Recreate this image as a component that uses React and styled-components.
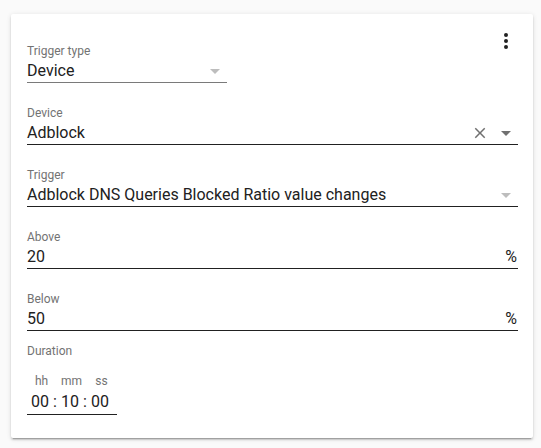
import React from 'react'
import styled, { createGlobalStyle } from 'styled-components'

const Global = createGlobalStyle`
  body {
    margin: 0;
    background: #fafafa;
    font-family: Roboto, "Noto Sans", sans-serif;
    color: #212121;
  }
`

const Page = styled.div`
  padding: 14px 8px 11px 11px;
`

const Card = styled.div`
  position: relative;
  width: 522px;
  box-sizing: border-box;
  background: #fff;
  border-radius: 2px;
  box-shadow: 0 2px 2px 0 rgba(0, 0, 0, 0.14), 0 1px 5px 0 rgba(0, 0, 0, 0.12),
    0 3px 1px -2px rgba(0, 0, 0, 0.2);
  padding: 29px 15px 23px 16px;
  display: flex;
  flex-direction: column;
  gap: 22px;
`

const MenuButton = styled.div`
  position: absolute;
  top: 15px;
  right: 15px;
  width: 24px;
  height: 24px;
  color: #212121;
`

const Field = styled.div`
  width: ${p => p.width || '100%'};
  display: flex;
  flex-direction: column;
`

const Label = styled.div`
  font-size: 12px;
  line-height: 16px;
  color: #737373;
`

const Control = styled.div`
  display: flex;
  align-items: center;
  height: 23px;
  border-bottom: 1px solid ${p => (p.muted ? '#7a7a7a' : '#212121')};
`

const Value = styled.div`
  flex: 1;
  font-size: 16px;
  line-height: 23px;
  color: #212121;
  white-space: nowrap;
`

const Suffix = styled.div`
  font-size: 16px;
  line-height: 23px;
  color: #212121;
  padding-right: 1px;
`

const IconSlot = styled.svg`
  width: ${p => p.size}px;
  height: ${p => p.size}px;
  flex-shrink: 0;
  fill: ${p => p.color};
  margin-right: ${p => p.mr || 0}px;
  margin-top: ${p => p.mt || 0}px;
`

const DurationLabel = styled(Label)`
  margin-bottom: 14px;
  margin-top: -10px;
`

const Time = styled.div`
  width: 90px;
  display: flex;
  align-items: flex-end;
  border-bottom: 1px solid #212121;
  padding-bottom: 2px;
`

const Segment = styled.div`
  width: 26px;
  display: flex;
  flex-direction: column;
  align-items: center;
`

const SegLabel = styled.div`
  font-size: 12px;
  line-height: 16px;
  color: #737373;
  margin-bottom: 3px;
  padding-left: 3px;
`

const SegValue = styled.div`
  font-size: 16px;
  line-height: 20px;
`

const Colon = styled.div`
  width: 4px;
  text-align: center;
  font-size: 16px;
  line-height: 20px;
`

const Arrow = ({ color, mr }) => (
  <IconSlot viewBox="7 10 10 5" size={10} color={color} mr={mr} mt={2} style={{ height: 5 }}>
    <path d="M7 10l5 5 5-5z" />
  </IconSlot>
)

const Close = () => (
  <IconSlot viewBox="0 0 24 24" size={18} color="#707070" mr={12} mt={1}>
    <path d="M19,6.41L17.59,5L12,10.59L6.41,5L5,6.41L10.59,12L5,17.59L6.41,19L12,13.41L17.59,19L19,17.59L13.41,12L19,6.41Z" />
  </IconSlot>
)

const segments = [
  { label: 'hh', value: '00' },
  { label: 'mm', value: '10' },
  { label: 'ss', value: '00' },
]

export default function App() {
  return (
    <Page>
      <Global />
      <Card>
        <MenuButton>
          <svg viewBox="0 0 24 24" width="24" height="24" fill="currentColor">
            <path d="M12,16A2,2 0 0,1 14,18A2,2 0 0,1 12,20A2,2 0 0,1 10,18A2,2 0 0,1 12,16M12,10A2,2 0 0,1 14,12A2,2 0 0,1 12,14A2,2 0 0,1 10,12A2,2 0 0,1 12,10M12,4A2,2 0 0,1 14,6A2,2 0 0,1 12,8A2,2 0 0,1 10,6A2,2 0 0,1 12,4Z" />
          </svg>
        </MenuButton>

        <Field width="200px">
          <Label>Trigger type</Label>
          <Control muted>
            <Value>Device</Value>
            <Arrow color="#bdbdbd" mr={7} />
          </Control>
        </Field>

        <Field>
          <Label>Device</Label>
          <Control>
            <Value>Adblock</Value>
            <Close />
            <Arrow color="#707070" mr={7} />
          </Control>
        </Field>

        <Field>
          <Label>Trigger</Label>
          <Control>
            <Value>Adblock DNS Queries Blocked Ratio value changes</Value>
            <Arrow color="#bdbdbd" mr={7} />
          </Control>
        </Field>

        <Field>
          <Label>Above</Label>
          <Control>
            <Value>20</Value>
            <Suffix>%</Suffix>
          </Control>
        </Field>

        <Field>
          <Label>Below</Label>
          <Control>
            <Value>50</Value>
            <Suffix>%</Suffix>
          </Control>
        </Field>

        <Field>
          <DurationLabel>Duration</DurationLabel>
          <Time>
            {segments.map((s, i) => (
              <React.Fragment key={s.label}>
                {i > 0 && <Colon>:</Colon>}
                <Segment>
                  <SegLabel>{s.label}</SegLabel>
                  <SegValue>{s.value}</SegValue>
                </Segment>
              </React.Fragment>
            ))}
          </Time>
        </Field>
      </Card>
    </Page>
  )
}
